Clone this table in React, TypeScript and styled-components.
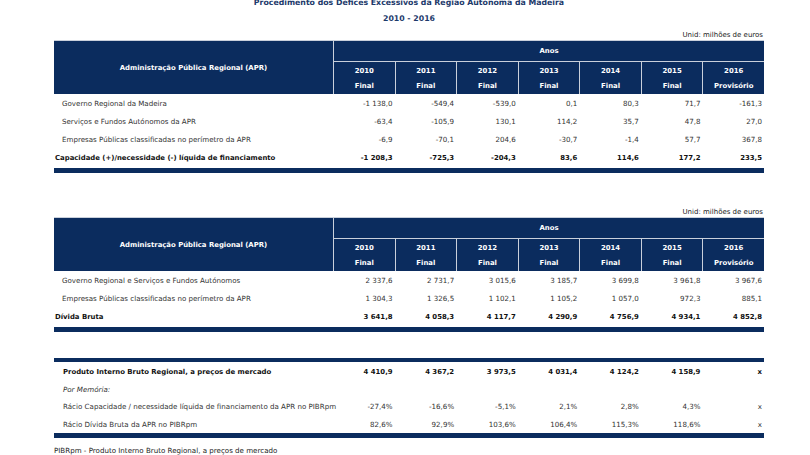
import React from "react";
import styled, { createGlobalStyle } from "styled-components";

const Global = createGlobalStyle`
  html, body { margin: 0; padding: 0; background: #fff; }
  body { font-family: "DejaVu Sans", Verdana, sans-serif; color: #222; overflow: hidden; }
`;

const NAVY = "#0b2c5e";
const LINE = "#c9d0db";
const COLS = "279px repeat(7, 1fr)";

const Page = styled.div`
  width: 810px;
  height: 455px;
  display: flex;
  flex-direction: column;
  align-items: flex-start;
  padding-left: 54px;
  box-sizing: border-box;
`;

const Title = styled.div`
  width: 710px;
  margin-top: -2px;
  height: 10px;
  line-height: 10px;
  font-size: 7.8px;
  font-weight: bold;
  color: #1d3a6b;
  text-align: center;
`;

const Period = styled(Title)`
  margin-top: 6px;
`;

const Block = styled.section<{ $gap: number }>`
  width: 710px;
  margin-top: ${(p) => p.$gap}px;
  display: flex;
  flex-direction: column;
`;

const Unit = styled.div`
  height: 9px;
  line-height: 9px;
  font-size: 7px;
  text-align: right;
  padding-right: 1px;
  color: #222;
`;

const Head = styled.div`
  display: grid;
  grid-template-columns: ${COLS};
  grid-template-rows: 20px 32px;
  gap: 1px;
  background: ${LINE};
  border-top: 1px solid ${LINE};
`;

const HeadCell = styled.div`
  background: ${NAVY};
  color: #fff;
  font-weight: bold;
  font-size: 6.9px;
  display: flex;
  align-items: center;
  justify-content: center;
  text-align: center;
`;

const HeadLabel = styled(HeadCell)`
  grid-row: span 2;
`;

const Anos = styled(HeadCell)`
  grid-column: span 7;
`;

const YearCell = styled(HeadCell)`
  flex-direction: column;
  justify-content: space-around;
  padding: 2px 0 1px;
`;

const Row = styled.div<{ $h: number; $bold?: boolean; $italic?: boolean }>`
  display: grid;
  grid-template-columns: ${COLS};
  column-gap: 1px;
  height: ${(p) => p.$h}px;
  align-items: center;
  font-size: ${(p) => (p.$bold ? 6.9 : 7.1)}px;
  font-weight: ${(p) => (p.$bold ? "bold" : "normal")};
  font-style: ${(p) => (p.$italic ? "italic" : "normal")};
  color: ${(p) => (p.$bold ? "#111" : "#333")};
`;

const Label = styled.div<{ $indent: number }>`
  padding-left: ${(p) => p.$indent}px;
  white-space: nowrap;
`;

const Num = styled.div`
  text-align: right;
  padding-right: 2px;
  white-space: nowrap;
`;

const Bar = styled.div<{ $h: number }>`
  height: ${(p) => p.$h}px;
  background: ${NAVY};
`;

const Footnote = styled.div`
  width: 710px;
  margin-top: 8px;
  height: 10px;
  line-height: 10px;
  font-size: 7.1px;
  color: #222;
`;

const years = ["2010", "2011", "2012", "2013", "2014", "2015", "2016"];
const status = ["Final", "Final", "Final", "Final", "Final", "Final", "Provisório"];

type RowData = { label: string; values: string[]; bold?: boolean; italic?: boolean; h: number; indent: number };

const t1: RowData[] = [
  { label: "Governo Regional da Madeira", values: ["-1 138,0", "-549,4", "-539,0", "0,1", "80,3", "71,7", "-161,3"], h: 18, indent: 8 },
  { label: "Serviços e Fundos Autónomos da APR", values: ["-63,4", "-105,9", "130,1", "114,2", "35,7", "47,8", "27,0"], h: 18, indent: 8 },
  { label: "Empresas Públicas classificadas no perímetro da APR", values: ["-6,9", "-70,1", "204,6", "-30,7", "-1,4", "57,7", "367,8"], h: 18, indent: 8 },
  { label: "Capacidade (+)/necessidade (-) líquida de financiamento", values: ["-1 208,3", "-725,3", "-204,3", "83,6", "114,6", "177,2", "233,5"], bold: true, h: 20, indent: 1 },
];

const t2: RowData[] = [
  { label: "Governo Regional e Serviços e Fundos Autónomos", values: ["2 337,6", "2 731,7", "3 015,6", "3 185,7", "3 699,8", "3 961,8", "3 967,6"], h: 18, indent: 8 },
  { label: "Empresas Públicas classificadas no perímetro da APR", values: ["1 304,3", "1 326,5", "1 102,1", "1 105,2", "1 057,0", "972,3", "885,1"], h: 18, indent: 8 },
  { label: "Dívida Bruta", values: ["3 641,8", "4 058,3", "4 117,7", "4 290,9", "4 756,9", "4 934,1", "4 852,8"], bold: true, h: 20, indent: 1 },
];

const t3: RowData[] = [
  { label: "Produto Interno Bruto Regional, a preços de mercado", values: ["4 410,9", "4 367,2", "3 973,5", "4 031,4", "4 124,2", "4 158,9", "x"], bold: true, h: 19, indent: 9 },
  { label: "Por Memória:", values: ["", "", "", "", "", "", ""], italic: true, h: 16, indent: 9 },
  { label: "Rácio Capacidade / necessidade líquida de financiamento da APR no PIBRpm", values: ["-27,4%", "-16,6%", "-5,1%", "2,1%", "2,8%", "4,3%", "x"], h: 18, indent: 9 },
  { label: "Rácio Dívida Bruta da APR no PIBRpm", values: ["82,6%", "92,9%", "103,6%", "106,4%", "115,3%", "118,6%", "x"], h: 18, indent: 9 },
];

const Header = () => (
  <Head>
    <HeadLabel>Administração Pública Regional (APR)</HeadLabel>
    <Anos>Anos</Anos>
    {years.map((y, i) => (
      <YearCell key={y}>
        <span>{y}</span>
        <span>{status[i]}</span>
      </YearCell>
    ))}
  </Head>
);

const Rows = ({ data }: { data: RowData[] }) => (
  <>
    {data.map((r) => (
      <Row key={r.label} $h={r.h} $bold={r.bold} $italic={r.italic}>
        <Label $indent={r.indent}>{r.label}</Label>
        {r.values.map((v, i) => (
          <Num key={i}>{v}</Num>
        ))}
      </Row>
    ))}
  </>
);

export default function App() {
  return (
    <Page>
      <Global />
      <Title>Procedimento dos Défices Excessivos da Região Autónoma da Madeira</Title>
      <Period>2010 - 2016</Period>
      <Block $gap={7}>
        <Unit>Unid: milhões de euros</Unit>
        <Header />
        <Rows data={t1} />
        <Bar $h={5} />
      </Block>
      <Block $gap={35}>
        <Unit>Unid: milhões de euros</Unit>
        <Header />
        <Rows data={t2} />
        <Bar $h={5} />
      </Block>
      <Block $gap={26}>
        <Bar $h={4} />
        <Rows data={t3} />
        <Bar $h={5} />
      </Block>
      <Footnote>PIBRpm - Produto Interno Bruto Regional, a preços de mercado</Footnote>
    </Page>
  );
}
